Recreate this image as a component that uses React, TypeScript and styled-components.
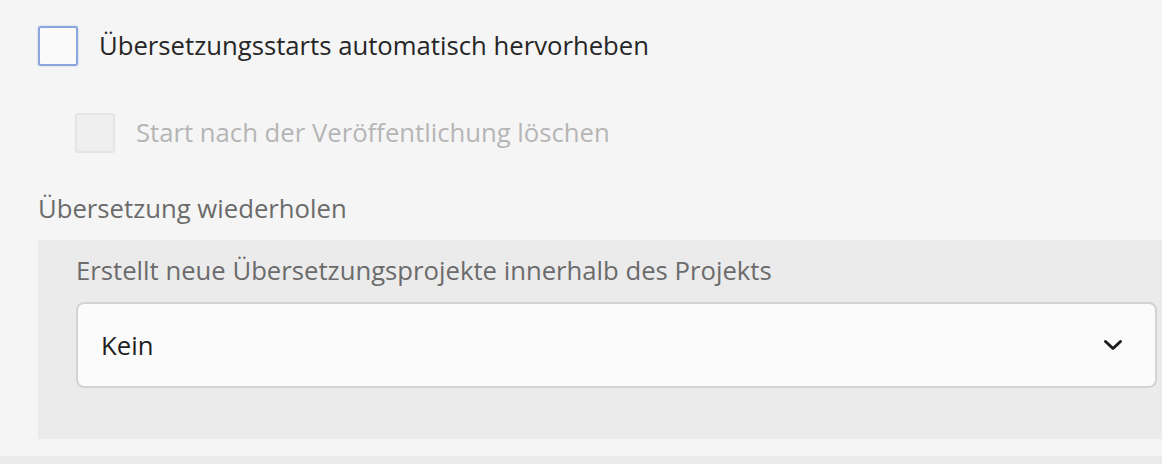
import React from 'react';
import styled, { createGlobalStyle } from 'styled-components';

const GlobalStyle = createGlobalStyle`
  html, body {
    margin: 0;
    padding: 0;
    background: #f5f5f5;
  }
  body {
    font-family: "Open Sans", "Noto Sans", sans-serif;
  }
`;

const Page = styled.div`
  width: 1162px;
  height: 464px;
  overflow: hidden;
  background: #f5f5f5;
  padding: 26px 0 0 38px;
  box-sizing: border-box;
  display: flex;
  flex-direction: column;
`;

const CheckRow = styled.label<{ $indent?: boolean }>`
  display: flex;
  align-items: center;
  gap: 21px;
  margin-left: ${p => (p.$indent ? '37px' : '0')};
  margin-bottom: ${p => (p.$indent ? '39px' : '47px')};
`;

const Box = styled.span<{ $disabled?: boolean }>`
  width: 40px;
  height: 40px;
  box-sizing: border-box;
  border-radius: 3px;
  background: ${p => (p.$disabled ? '#efefef' : '#fafafa')};
  border: 2px solid ${p => (p.$disabled ? '#e4e4e4' : '#8aa6dc')};
  box-shadow: ${p => (p.$disabled ? 'none' : '0 0 2px rgba(100, 140, 220, 0.45)')};
  flex-shrink: 0;
`;

const CheckText = styled.span<{ $disabled?: boolean }>`
  font-size: 25.7px;
  line-height: 34px;
  color: ${p => (p.$disabled ? '#b5b5b5' : '#262626')};
`;

const SectionLabel = styled.div`
  font-size: 25.7px;
  line-height: 34px;
  color: #6b6b6b;
  margin-bottom: 14px;
`;

const Panel = styled.div`
  background: #ebebeb;
  padding: 14px 0 51px 38px;
  display: flex;
  flex-direction: column;
  gap: 14px;
`;

const FieldLabel = styled.div`
  font-size: 25.7px;
  line-height: 34px;
  color: #6b6b6b;
`;

const Select = styled.div`
  width: 1081px;
  height: 86px;
  box-sizing: border-box;
  background: #fbfbfb;
  border: 2px solid #d3d3d3;
  border-radius: 8px;
  display: flex;
  align-items: center;
  justify-content: space-between;
  padding: 0 32px 0 23px;
`;

const SelectValue = styled.span`
  font-size: 25.7px;
  color: #1f1f1f;
`;

const Chevron = () => (
  <svg width="20" height="14" viewBox="0 0 20 14" fill="none">
    <path d="M2.5 3.5 L10 10.5 L17.5 3.5" stroke="#1c1c1c" strokeWidth="3" strokeLinecap="round" strokeLinejoin="round" />
  </svg>
);

const BottomStrip = styled.div`
  margin: 17px 0 0 -38px;
  height: 8px;
  background: #ebebeb;
`;

export default function App() {
  return (
    <>
      <GlobalStyle />
      <Page>
        <CheckRow>
          <Box />
          <CheckText>Übersetzungsstarts automatisch hervorheben</CheckText>
        </CheckRow>
        <CheckRow $indent>
          <Box $disabled />
          <CheckText $disabled>Start nach der Veröffentlichung löschen</CheckText>
        </CheckRow>
        <SectionLabel>Übersetzung wiederholen</SectionLabel>
        <Panel>
          <FieldLabel>Erstellt neue Übersetzungsprojekte innerhalb des Projekts</FieldLabel>
          <Select>
            <SelectValue>Kein</SelectValue>
            <Chevron />
          </Select>
        </Panel>
        <BottomStrip />
      </Page>
    </>
  );
}
